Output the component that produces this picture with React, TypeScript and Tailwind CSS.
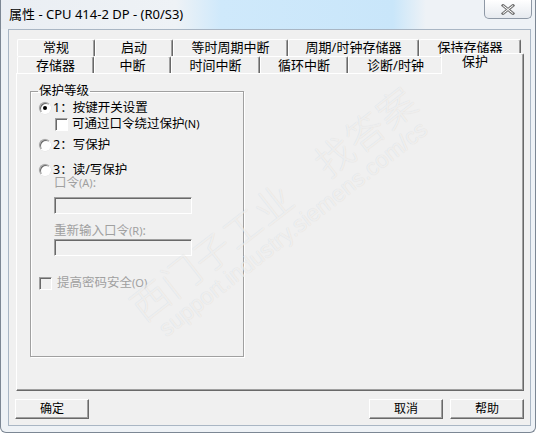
import React from "react";

const row1 = [
  { t: "常规", w: "w-[78px]" },
  { t: "启动", w: "w-[78px]" },
  { t: "等时周期中断", w: "w-[115px]" },
  { t: "周期/时钟存储器", w: "w-[131px]" },
  { t: "保持存储器", w: "w-[102px]" },
];

const row2 = [
  { t: "存储器", w: "w-[77px]" },
  { t: "中断", w: "w-[77px]" },
  { t: "时间中断", w: "w-[89px]" },
  { t: "循环中断", w: "w-[88px]" },
  { t: "诊断/时钟", w: "w-[95px]" },
];

function Tab({ t, w, top = false }: { t: string; w: string; top?: boolean }) {
  return (
    <div
      className={`${w} flex h-full justify-center rounded-t-[2px] border-l border-r border-t border-l-white border-r-[#696969] border-t-white shadow-[inset_-1px_0_0_#a0a0a0] text-[13px] ${top ? "items-start leading-[14px]" : "items-center leading-[16px]"}`}
    >
      {t}
    </div>
  );
}

function Radio({ checked = false }: { checked?: boolean }) {
  return (
    <span className="flex h-[12px] w-[12px] shrink-0 items-center justify-center rounded-full border border-b-white border-l-[#a0a0a0] border-r-white border-t-[#a0a0a0] bg-white shadow-[inset_1px_1px_0_#696969,0_0_0_0.5px_#e3e3e3]">
      {checked && <span className="h-[4px] w-[4px] rounded-full bg-black" />}
    </span>
  );
}

function Check({ disabled = false }: { disabled?: boolean }) {
  return (
    <span
      className={`h-[13px] w-[13px] shrink-0 border border-b-white border-l-[#a0a0a0] border-r-white border-t-[#a0a0a0] shadow-[inset_1px_1px_0_#696969] ${disabled ? "bg-[#f0f0f0]" : "bg-white"}`}
    />
  );
}

function Field() {
  return (
    <div className="ml-[23px] h-[17px] w-[138px] border border-b-white border-l-[#a0a0a0] border-r-white border-t-[#a0a0a0] bg-[#f0f0f0] shadow-[inset_1px_1px_0_#696969]" />
  );
}

function Btn({ label }: { label: string }) {
  return (
    <button className="h-[20px] w-[74px] border border-b-[#696969] border-l-white border-r-[#696969] border-t-white bg-[#f0f0f0] text-[12px] leading-[16px] text-black shadow-[inset_-1px_-1px_0_#a0a0a0]">
      {label}
    </button>
  );
}

export default function App() {
  return (
    <div className="relative h-[434px] w-[537px] overflow-hidden bg-white font-['Noto_Sans','Noto_Sans_CJK_SC',sans-serif] text-black">
      <div className="h-[433px] w-[536px] rounded-b-[6px] border-b border-l border-r border-[#7c8794] bg-[#eef2f6]">
        {/* title bar */}
        <div className="flex h-[29px] items-start justify-between bg-[linear-gradient(90deg,#eaeef3_0px,#eef2f6_175px,#cfe9fb_220px,#c9e6fa_392px,#eef2f6_425px)]">
          <div className="pl-[8px] pt-[5px] text-[13px] leading-[18px] text-black">
            属性 - CPU 414-2 DP - (R0/S3)
          </div>
          <div className="mr-[3px] flex h-[19px] w-[48px] items-center justify-center rounded-b-[5px] border border-t-0 border-[#8e98a5] bg-[linear-gradient(#ffffff,#e6eaef)]">
            <svg width="14" height="11" viewBox="0 0 14 11">
              <path d="M2 1.5 L12 9.5 M12 1.5 L2 9.5" stroke="#7a7a7a" strokeWidth="3" strokeLinecap="square" fill="none" />
              <path d="M2 1.5 L12 9.5 M12 1.5 L2 9.5" stroke="#ffffff" strokeWidth="1" fill="none" />
            </svg>
          </div>
        </div>

        {/* client area */}
        <div className="ml-[7px] h-[397px] w-[523px] border border-[#a9b6c4] bg-[#f0f0f0]">
          <div className="ml-[7px] mt-[9px] w-[508px]">
            <div className="flex h-[17px] pl-[1px]">
              {row1.map((r) => (
                <Tab key={r.t} {...r} top />
              ))}
            </div>
            <div className="relative z-10 flex h-[17px] items-end pl-[1px]">
              {row2.map((r) => (
                <Tab key={r.t} {...r} />
              ))}
              <div className="-mb-[1px] -ml-[2px] flex h-[21px] w-[83px] items-start rounded-t-[2px] border-l border-r border-t border-l-white border-r-[#696969] border-t-white bg-[#f0f0f0] pl-[20px] text-[13px] leading-[14px] shadow-[inset_-1px_0_0_#a0a0a0]">
                保护
              </div>
            </div>
            <div className="h-[318px] w-[508px] border border-b-[#696969] border-l-white border-r-[#696969] border-t-white shadow-[inset_-1px_-1px_0_#a0a0a0]">
              <fieldset className="ml-[13px] mt-[9px] h-[274px] w-[214px] border border-[#a0a0a0] text-[12.5px] leading-[16px] shadow-[1px_1px_0_#ffffff,inset_1px_1px_0_#ffffff]">
                <legend className="ml-[7px] px-[1px] text-[12.5px] leading-[16px]">保护等级</legend>
                <div className="flex flex-col pl-[8px]">
                  <div className="mt-[1px] flex h-[16px] items-center gap-[2px]">
                    <Radio checked />
                    <span>1：按键开关设置</span>
                  </div>
                  <div className="ml-[16px] flex h-[16px] items-center gap-[4px]">
                    <Check />
                    <span>
                      可通过口令绕过保护<span className="text-[11px]">(N)</span>
                    </span>
                  </div>
                  <div className="mt-[5px] flex h-[16px] items-center gap-[2px]">
                    <Radio />
                    <span>2：写保护</span>
                  </div>
                  <div className="mt-[9px] flex h-[16px] items-center gap-[2px]">
                    <Radio />
                    <span>3：读/写保护</span>
                  </div>
                  <div className="-mt-[2px] h-[14px] pl-[15px] leading-[14px] text-[#a0a0a0]">
                    口令<span className="text-[11px]">(A)</span>:
                  </div>
                  <div className="-ml-[8px] mt-[7px]">
                    <Field />
                  </div>
                  <div className="mt-[10px] h-[14px] pl-[15px] leading-[14px] text-[#a0a0a0]">
                    重新输入口令<span className="text-[11px]">(R)</span>:
                  </div>
                  <div className="-ml-[8px] mt-[1px]">
                    <Field />
                  </div>
                  <div className="mt-[19px] flex h-[16px] items-center gap-[5px] text-[#a0a0a0]">
                    <Check disabled />
                    <span>
                      提高密码安全<span className="text-[11px]">(O)</span>
                    </span>
                  </div>
                </div>
              </fieldset>
            </div>
          </div>
          <div className="mt-[8px] flex pl-[6px] pr-[6px]">
            <Btn label="确定" />
            <div className="flex-1" />
            <div className="flex gap-[7px]">
              <Btn label="取消" />
              <Btn label="帮助" />
            </div>
          </div>
        </div>
      </div>

      {/* watermark */}
      <div className="pointer-events-none absolute left-[280px] top-[212px] flex -translate-x-1/2 -translate-y-1/2 -rotate-[38deg] flex-col items-center whitespace-nowrap text-white/60 [text-shadow:0_0_1px_rgba(0,0,0,0.12)]">
        <div className="font-['Noto_Sans_CJK_SC',sans-serif] text-[38px] font-light leading-[42px] tracking-[1px]">西门子工业　找答案</div>
        <div className="font-['Liberation_Sans',sans-serif] text-[23px] leading-[24px]">support.industry.siemens.com/cs</div>
      </div>
    </div>
  );
}
